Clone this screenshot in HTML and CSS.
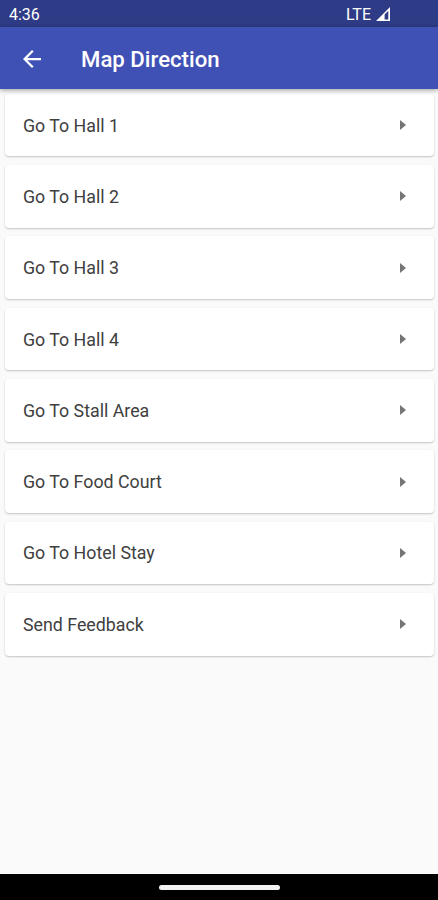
FILE: index.html
```html
<!DOCTYPE html>
<html lang="en">
  <head>
    <meta charset="UTF-8" />
    <meta name="viewport" content="width=device-width, initial-scale=1.0" />
    <title>Map Direction</title>
    <link rel="stylesheet" href="styles.css">
  </head>
  <body>
    <div class="status-bar">
      <span class="time">4:36</span>
      <div class="network">
        <span>LTE</span>
        <svg class="signal" viewBox="0 0 14 14">
          <path d="M0 14 L14 0 V14 Z M8.6 7.4 V12.4 H12.3 V3.7 Z" fill="#fff" fill-rule="evenodd" />
        </svg>
      </div>
    </div>

    <header class="app-bar">
      <svg class="back" viewBox="4 4 16 16">
        <path d="M20 11H7.83l5.59-5.59L12 4l-8 8 8 8 1.41-1.41L7.83 13H20v-2z" fill="#fff" />
      </svg>
      <h1>Map Direction</h1>
    </header>

    <main class="list">
      <div class="card"><span>Go To Hall 1</span><i class="arrow"></i></div>
      <div class="card"><span>Go To Hall 2</span><i class="arrow"></i></div>
      <div class="card"><span>Go To Hall 3</span><i class="arrow"></i></div>
      <div class="card"><span>Go To Hall 4</span><i class="arrow"></i></div>
      <div class="card"><span>Go To Stall Area</span><i class="arrow"></i></div>
      <div class="card"><span>Go To Food Court</span><i class="arrow"></i></div>
      <div class="card"><span>Go To Hotel Stay</span><i class="arrow"></i></div>
      <div class="card"><span>Send Feedback</span><i class="arrow"></i></div>
    </main>

    <div class="nav-bar">
      <div class="handle"></div>
    </div>
  </body>
</html>
```

FILE: styles.css
```css
* {
  box-sizing: border-box;
}
body {
  margin: 0;
  height: 100vh;
  display: flex;
  flex-direction: column;
  overflow: hidden;
  background: #fafafa;
  font-family: Roboto, sans-serif;
}
.status-bar {
  height: 27px;
  flex: none;
  display: flex;
  align-items: center;
  justify-content: space-between;
  padding: 1px 48px 0 9px;
  background: #2e3c87;
  color: #fff;
  font-size: 16px;
}
.network {
  display: flex;
  align-items: center;
  gap: 5px;
}
.signal {
  width: 14px;
  height: 14px;
}
.app-bar {
  height: 62px;
  flex: none;
  display: flex;
  align-items: center;
  padding: 2px 23px 0;
  background: #3f51b5;
  color: #fff;
  box-shadow: 0 1px 5px rgba(0, 0, 0, 0.4);
  z-index: 1;
}
.back {
  width: 18px;
  height: 18px;
}
.app-bar h1 {
  margin: 0 0 0 40px;
  font-size: 22.2px;
  font-weight: 500;
}
.list {
  flex: 1;
  display: flex;
  flex-direction: column;
  gap: 8.9px;
  padding: 4.8px 4.5px 0 5px;
}
.card {
  height: 62.45px;
  flex: none;
  display: flex;
  align-items: center;
  justify-content: space-between;
  padding: 0 28px 0 18px;
  border-radius: 4px;
  background: #fff;
  box-shadow: 0 1px 2px rgba(0, 0, 0, 0.22);
  color: #404040;
  font-size: 17.8px;
}
.arrow {
  border: solid transparent;
  border-width: 5px 0 5px 6px;
  border-left-color: #757575;
}
.nav-bar {
  height: 26px;
  flex: none;
  display: flex;
  align-items: center;
  justify-content: center;
  background: #000;
}
.handle {
  width: 121px;
  height: 5px;
  border-radius: 3px;
  background: #f2f2f2;
}
```
